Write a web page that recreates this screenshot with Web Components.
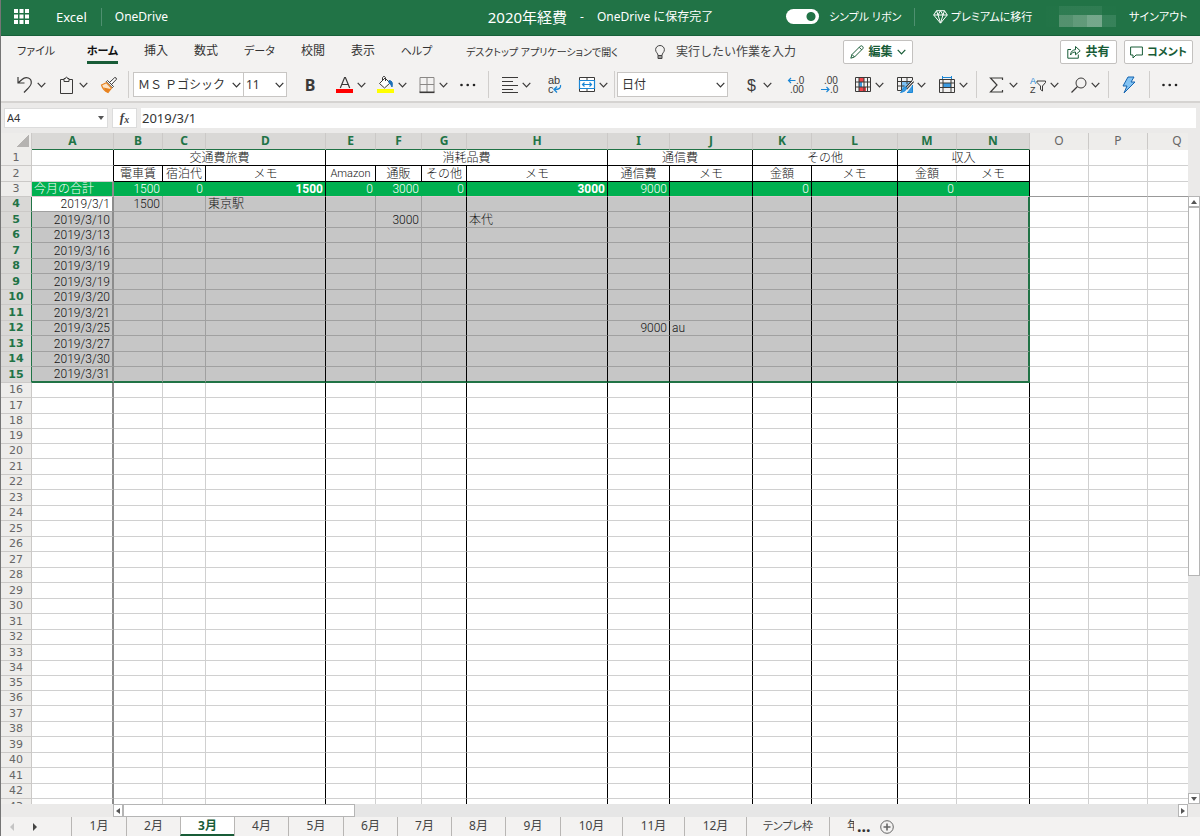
<!DOCTYPE html>
<html lang="ja">
<head>
<meta charset="utf-8">
<meta name="viewport" content="width=device-width, initial-scale=1">
<title>2020年経費 - Excel</title>
<style>
html{height:100%}
body{margin:0;height:100vh;box-sizing:border-box;border-left:1px solid #757575;display:flex;flex-direction:column;overflow:hidden;background:#ebeae9;color:#333;
font:12px/16px "Noto Sans","Noto Sans CJK JP",sans-serif}
</style>
</head>
<body>
<excel-titlebar></excel-titlebar>
<ribbon-tabs></ribbon-tabs>
<ribbon-tools></ribbon-tools>
<formula-bar cell="A4" value="2019/3/1"></formula-bar>
<sheet-view></sheet-view>
<sheet-tabs></sheet-tabs>

<script>
const define = (name, html, setup) => {
  const t = document.createElement('template');
  t.innerHTML = html;
  customElements.define(name, class extends HTMLElement {
    constructor() {
      super();
      this.attachShadow({mode: 'open'}).append(t.content.cloneNode(true));
    }
    connectedCallback() { if (setup) setup(this, this.shadowRoot); }
  });
};
const chevron = '<svg class="chev" width="9" height="6" viewBox="0 0 9 6" fill="none" stroke="currentColor" stroke-width="1.200"><path d="M.7.8 4.5 4.8 8.3.8"/></svg>';

/* Title bar */
define('excel-titlebar', `
<style>
:host{display:grid;grid-template-columns:1fr auto 1fr;align-items:center;flex:none;height:36px;padding-bottom:2px;background:#217346;color:#fff;border-bottom:1px solid #17603a;box-sizing:border-box}
div{display:flex;align-items:center;white-space:nowrap}
a{color:inherit;text-decoration:none}
button{all:unset}
svg{flex:none}
.waffle{display:flex;margin:0 27px 0 13px}
.app{font-size:13px}
.rule{width:1px;height:18px;background:#4f9070}
.left .rule{margin:0 13px 0 14px}
h1{font-size:15px;font-weight:400;margin:0}
.title span{margin:0 13px}
.right{justify-content:flex-end;padding-right:16px;font-size:11px;font-feature-settings:"palt"}
.switch{appearance:none;margin:0 10px 0 0;width:33px;height:15px;border-radius:8px;background:radial-gradient(circle at 25px 50%,#217346 4px,#fff 5px)}
.right label{width:68px}
.right .rule{margin:0 18px 0 17px}
.premium{display:flex;align-items:center;gap:3px;width:100px}
.user{width:70px;height:21px;margin:0 13px 0 13px;background:linear-gradient(#33805610,#33805610),
linear-gradient(90deg,#569270 0 14px,#649c7c 14px 28px,#79aa8f 28px 43px) 13px 9px/43px 12px no-repeat,
linear-gradient(#2f7c52,#2f7c52) 13px 0/43px 9px no-repeat,linear-gradient(#37825a,#37825a) 56px 9px/14px 12px no-repeat}
.out{width:55px}
</style>
<div class="left"><button class="waffle" aria-label="アプリ起動ツール"><svg width="15" height="15" viewBox="0 0 15 15" fill="#fff"><path d="M0 0h4v4H0zM5.500 0h4v4h-4zM11 0h4v4h-4zM0 5.500h4v4H0zM5.500 5.500h4v4h-4zM11 5.500h4v4h-4zM0 11h4v4H0zM5.500 11h4v4h-4zM11 11h4v4h-4z"/></svg></button>
<a class="app" href="#">Excel</a><span class="rule"></span><a href="#">OneDrive</a></div>
<div class="title"><h1>2020年経費</h1><span>-</span><b style="font-weight:400">OneDrive に保存完了</b></div>
<div class="right"><input class="switch" id="simple" type="checkbox" role="switch" checked><label for="simple">シンプル リボン</label><span class="rule"></span>
<a class="premium" href="#"><svg width="15" height="14" viewBox="0 0 15 14" fill="none" stroke="#fff"><path d="M3.500.7h8L14.300 5 7.500 13.200.7 5zM.7 5h13.600M5 5l2.500 8L10 5M3.500.7 5 5 7.500.7 10 5 11.500.7"/></svg>プレミアムに移行</a>
<span class="user"></span><a class="out" href="#">サインアウト</a></div>`);

/* Ribbon tab row */
define('ribbon-tabs', `
<style>
:host{display:flex;align-items:center;flex:none;height:32px;background:#f3f2f1;padding:0 7px 0 18px;white-space:nowrap}
nav{display:flex;gap:26px;font-feature-settings:"palt"}
a{color:#333;text-decoration:none}
nav a{display:flex;justify-content:center;width:24px;height:24px;line-height:22px;box-sizing:border-box}
nav a.k{width:31px;font-size:11px}
nav a.file{width:34px;margin-right:8px;font-size:11px}
nav a.on{font-weight:700;color:#111;border-bottom:3px solid #185c37}
.desk{margin-left:34px;width:189px;font-size:10px;font-feature-settings:"palt"}
.tell{display:flex;align-items:center;gap:11px;width:188px}
input{all:unset;width:130px;font-size:12px}
input::placeholder{color:#444;opacity:1}
svg{flex:none}
button{display:flex;align-items:center;justify-content:center;gap:4px;height:24px;box-sizing:border-box;padding:0;background:#fff;border:1px solid #c3c1bf;border-radius:2px;color:#185c37;font:700 12px/16px "Noto Sans","Noto Sans CJK JP",sans-serif}
.edit{width:70px}.share{width:57px;margin-left:auto}.note{width:69px;margin-left:7px;font-size:11px;font-feature-settings:"palt"}
</style>
<nav><a class="file" href="#">ファイル</a><a class="k on" href="#">ホーム</a><a href="#">挿入</a><a href="#">数式</a><a class="k" href="#">データ</a><a href="#">校閲</a><a href="#">表示</a><a class="k" href="#">ヘルプ</a></nav>
<a class="desk" href="#">デスクトップ アプリケーションで開く</a>
<label class="tell"><svg width="10" height="15" viewBox="0 0 10 15" fill="none" stroke="#444"><path d="M3 10.500C3 8 .6 7.500.6 4.700a4.400 4.200 0 0 1 8.800 0C9.400 7.500 7 8 7 10.500zM3 10.500v3h4v-3M3 12h4"/></svg><input type="text" placeholder="実行したい作業を入力" aria-label="操作アシスト"></label>
<button class="edit"><svg width="14" height="14" viewBox="0 0 14 14" fill="none" stroke="currentColor"><path d="M.8 13.200 2 9.500 10.300 1.200Q11.500.3 12.600 1.400T12.800 3.700L4.500 12zM2 9.500 4.500 12M9.200 2.300l2.500 2.500"/></svg>編集${chevron}</button>
<button class="share"><svg width="14" height="14" viewBox="0 0 14 14" fill="none" stroke="currentColor"><path d="M4 4.500H.8v8.700h10.500V9.500M3.500 10C3.800 6.300 6 4.800 8.500 4.700V1.500l4.700 4.300-4.700 4V7C6.300 7 4.800 7.800 3.500 10z"/></svg>共有</button>
<button class="note"><svg width="13" height="13" viewBox="0 0 13 13" fill="none" stroke="currentColor"><path d="M.6 1h11.800v8H6L3 12V9H.6z"/></svg>コメント</button>`);

/* One toolbar button: slotted icon with an optional arrow */
define('tool-button', `
<style>
:host{display:block;flex:none;width:30px}
:host([menu]){width:41px}
button{all:unset;display:flex;align-items:center;box-sizing:border-box;width:100%;height:26px;padding-left:6px;gap:3px;color:#3b3a39}
.chev{display:none}
:host([menu]) .chev{display:block}
.i{display:flex;justify-content:center;align-items:center;width:18px;height:18px}
</style>
<button><span class="i"><slot></slot></span>${chevron}</button>`, (host, root) => {
  root.querySelector('button').setAttribute('aria-label', host.getAttribute('label') || '');
});

/* Drop-down with its own arrow */
define('tool-select', `
<style>
:host{display:grid;align-items:center;flex:none;width:111px;height:25px;box-sizing:border-box;border:1px solid #c8c6c4;background:#fff}
:host([small]){width:44px;margin-left:-1px}
select,.chev{grid-area:1/1}
.chev{justify-self:end;margin-right:2px;pointer-events:none}
select{appearance:none;border:0;background:none;padding:0 0 0 4px;width:100%;height:23px;color:#333;font:12px/16px "Noto Sans","Noto Sans CJK JP",sans-serif;outline:0}
:host([small]) select{padding-left:2px}
</style>
<select></select>${chevron}`, (host, root) => {
  const s = root.querySelector('select');
  s.setAttribute('aria-label', host.getAttribute('label'));
  s.add(new Option(host.getAttribute('value')));
});

const svg = body => `<svg width="18" height="18" viewBox="0 0 18 18" fill="none" stroke="#3b3a39">${body}</svg>`;
const dots = svg('<g fill="#222" stroke="none"><circle cx="2.500" cy="9" r="1.300"/><circle cx="8.700" cy="9" r="1.300"/><circle cx="15" cy="9" r="1.300"/></g>');

define('ribbon-tools', `
<style>
:host{display:flex;align-items:center;flex:none;height:33px;padding:0 12px 0 9px;background:#f3f2f1;border-bottom:2px solid #d5d3d1;overflow:hidden}
.g{display:flex;align-items:center}
.s{flex:none;width:1px;height:27px;background:#d0cecc;margin:0 5px}
.one{gap:1px}.font{margin-left:8px}.al{gap:3px;margin-left:1px}.num{gap:4px;margin-left:8px}.tab{gap:1px;margin-left:3px}
.font tool-button:first-child{margin-right:5px}
svg{overflow:visible}
svg text{font-family:"Liberation Sans",sans-serif;stroke:none;fill:#3b3a39}
</style>
<div class="g one">
<tool-button menu label="元に戻す">${svg('<path d="M2 1v6h6.500M2 7 6 3.500C10-.2 16 2 15.200 7.500 14.500 11 11 13 8 16.500" stroke-width="1.200"/>')}</tool-button>
<tool-button menu label="貼り付け">${svg('<path d="M6 3.500H2.500v14h12v-14H11M6 5.500v-3h1.500a1 1.300 0 0 1 2 0H11v3z"/>')}</tool-button>
<tool-button label="書式のコピー">${svg('<path d="M9.500 6.500 14.800 1.500q1.700 0 1.700 1.700L11.500 8.500M7.500 4.500 13.500 10.500 12.300 11.700 6.300 5.700z" fill="#fff"/><path d="M6.300 6.700 1.500 9q1.500 5 6.500 7.500L11.500 12z" stroke="#e8821e" fill="#fbe3c6" stroke-width="1.200"/><path d="M3.500 11.500 10.500 13 8 16.500q-3-1.500-4.500-5z" fill="#e8821e" stroke="none"/>')}</tool-button>
</div><span class="s" style="margin:0 4px"></span>
<tool-select label="フォント" value="ＭＳ Ｐゴシック"></tool-select><tool-select small label="サイズ" value="11"></tool-select>
<div class="g font">
<tool-button label="太字"><b style="font-size:16px">B</b></tool-button>
<tool-button menu label="文字の色">${svg('<path d="M4.300 12 8.600 1.500h.8L13.700 12M5.800 8.500h6.400" stroke-width="1.200"/><path d="M0 13h17v4H0z" fill="#f00" stroke="none"/>')}</tool-button>
<tool-button menu label="塗りつぶしの色">${svg('<path d="M2.500 7.500 8 2l5 5-5.500 5zM5.500 5V1.500q1.500-2.500 3 0V5" fill="#fff"/><path d="M12 4.500q4.500 0 3 6.500-1-3-3-4z" fill="#1b6fb8" stroke="#1b6fb8"/><path d="M0 13h17v4H0z" fill="#ff0" stroke="none"/>')}</tool-button>
<tool-button menu label="罫線">${svg('<path d="M2 16V1.500h14V16M9 2v14M2 8.500h14" stroke="#8a8886"/><path d="M1.500 16.300h15" stroke-width="1.600"/>')}</tool-button>
<tool-button label="その他のフォント">${dots}</tool-button>
</div><span class="s"></span>
<div class="g al">
<tool-button menu label="配置">${svg('<path d="M1 1.500h16M1 5.500h11M1 9.500h16M1 13.500h11M1 16.500h16" stroke-width="1.200"/>')}</tool-button>
<tool-button label="折り返して全体を表示する">${svg('<text x="3" y="8" font-size="11">ab</text><text x="3" y="17" font-size="11">c</text><path d="M15.500 9q1 4.500-6 4.500M12 10.500l-3 3 3 3" stroke="#1b87d6" stroke-width="1.300"/>')}</tool-button>
<tool-button menu label="セルの結合">${svg('<path d="M1.500 1.500h15v14h-15zM9 1.500V4M9 13v3" fill="#fff"/><path d="M1.500 4.500h15v8h-15zM4.500 8.500h9M6.500 6.500l-2 2 2 2M11.500 6.500l2 2-2 2" stroke="#1b87d6" stroke-width="1.200"/>')}</tool-button>
</div><span class="s" style="margin:0 2px 0 1px"></span>
<tool-select label="表示形式" value="日付"></tool-select>
<div class="g num">
<tool-button menu label="通貨">${svg('<text x="5" y="15" font-size="16">$</text>')}</tool-button>
<tool-button label="小数点以下の表示桁数を増やす">${svg('<path d="M1.500 4.500h7M4 2 1.500 4.500 4 7" stroke="#1b87d6" stroke-width="1.200"/><text x="9" y="8" font-size="10">.0</text><text x="3" y="17" font-size="10">.00</text>')}</tool-button>
<tool-button label="小数点以下の表示桁数を減らす">${svg('<text x="3" y="8" font-size="10">.00</text><path d="M0 13.500h8M5.500 11 8 13.500 5.500 16" stroke="#1b87d6" stroke-width="1.200"/><text x="9" y="17" font-size="10">.0</text>')}</tool-button>
</div>
<div class="g tab">
<tool-button menu label="条件付き書式">${svg('<path d="M5 1.500h5V6H5zM5 11h7v4.500H5z" fill="#f0444a" stroke="none"/><path d="M5 6h3v5H5z" fill="#3b9be2" stroke="none"/><path d="M1.500 1.500h15v14h-15zM5 1.500v14M10 1.500v14M13.500 1.500v14M1.500 6h15M1.500 11h15"/>')}</tool-button>
<tool-button menu label="テーブルとして書式設定">${svg('<path d="M6 6h9l-6 9H6z" fill="#7cc0f2" stroke="none"/><path d="M16.500 4V1.500h-15v13h4M5.500 1.500v13M11 1.500V8M1.500 5.500h14M1.500 10h7"/><path d="M17 5 10 12.500" stroke-width="3"/><path d="M17 5 10 12.500" stroke="#fff"/><path d="M10.500 11.500q0 4-6 5 2-1.500 2.500-4 1-2 3.500-1zM16.500 9v7.500H11" stroke="#1b87d6" fill="#3b9be2"/>')}</tool-button>
<tool-button menu label="セルの挿入">${svg('<path d="M5 7h8v4.500H5z" fill="#3b9be2" stroke="none"/><path d="M1.500 3.500h15v13h-15zM5 3.500v13M13 3.500v13M1.500 7h15M1.500 11.500h15"/><path d="M4.500 0v3M13.500 0v3M4.500 1.500h9" stroke="#1b87d6"/>')}</tool-button>
</div><span class="s" style="margin:0 5px 0 3px"></span>
<div class="g">
<tool-button menu label="合計">${svg('<path d="M14.500 4V2h-12l6.500 7L2.500 16h12v-2" stroke-width="1.200"/>')}</tool-button>
<tool-button menu label="並べ替えとフィルター">${svg('<text x="1" y="8" font-size="9" style="fill:#1b87d6">A</text><text x="1" y="17" font-size="9">Z</text><path d="M8 5h8.500v1.500l-3 3.500v5l-2-1.500V10L8 6.500z"/>')}</tool-button>
<tool-button menu label="検索と選択">${svg('<circle cx="11" cy="7" r="5"/><path d="M7.500 10.500 1.500 16.500" stroke-width="1.200"/>')}</tool-button>
</div><span class="s" style="margin:0 5px 0 3px"></span>
<tool-button label="アイデア">${svg('<path d="M8 1h6l-3 5h4L4 17l3-7H3z" fill="#83c3f3" stroke="#1565b0"/>')}</tool-button><span class="s"></span>
<tool-button label="その他">${dots}</tool-button>`);

/* Name box and formula input */
define('formula-bar', `
<style>
:host{display:flex;flex:none;gap:4px;height:20px;padding:5px 4px 5px 3px}
div{display:flex;align-items:center;background:#fff;box-sizing:border-box;border:1px solid #dcdcdc}
.name{width:104px;padding:0 3px 0 2px;justify-content:space-between}
.fx{width:25px;justify-content:center;color:#444;font:italic 700 13px/18px "Liberation Serif",serif}
.fx small{font-size:10px;padding-top:3px}
.val{flex:1;border-color:#fff}
input{all:unset;width:80px;font-size:11px;color:#333}
.val input{width:100%;font-size:13px}
</style>
<div class="name"><input type="text" aria-label="名前ボックス"><svg width="6" height="4" viewBox="0 0 6 4"><path d="M0 0h6L3 4z" fill="#555"/></svg></div>
<div class="fx">f<small>x</small></div>
<div class="val"><input type="text" aria-label="数式バー"></div>`, (host, root) => {
  const [n, v] = root.querySelectorAll('input');
  n.value = host.getAttribute('cell'); v.value = host.getAttribute('value');
});

/* Scroll bar: track, thumb and the arrows at both ends */
define('scroll-bar', `
<style>
:host{display:flex;background:#e6e6e6;min-width:0;min-height:0}
:host([vertical]){flex-direction:column}
i{flex:none;box-sizing:border-box;background:#fff;border:1px solid #b5b5b5;width:10px;display:flex;align-items:center;justify-content:center}
:host([vertical]) i{width:auto;height:11px}
.track{flex:1;display:flex;flex-direction:inherit}
.thumb{box-sizing:border-box;background:#fff;border:1px solid #b5b5b5;flex:0 0 22%}
:host([vertical]) .thumb{flex-basis:63%}
.b svg{transform:rotate(180deg)}
:host([vertical]) .a svg{transform:rotate(90deg)}
:host([vertical]) .b svg{transform:rotate(270deg)}
</style>
<i class="a"><svg width="6" height="6" viewBox="0 0 6 6"><path d="M5 0v6L1 3z" fill="#555"/></svg></i><span class="track"><span class="thumb"></span></span><i class="b"><svg width="6" height="6" viewBox="0 0 6 6"><path d="M5 0v6L1 3z" fill="#555"/></svg></i>`);

/* Worksheet */
define('sheet-view', `
<style>
:host{flex:1;min-height:0;display:grid;grid-template:1fr 13px/minmax(0,1fr) 12px;background:#ebeae9}
.pane{overflow:hidden;min-height:0}
scroll-bar[vertical]{margin-top:63px}
.bottom{margin-left:112px}
table{border-collapse:separate;border-spacing:0;table-layout:fixed;width:1206px;background:#fff;font:300 12px/14px Roboto,"Noto Sans CJK JP",sans-serif;color:#111}
tr{height:15px}
tbody tr:nth-child(odd){height:16px}
tbody tr:nth-child(16n+3){height:15px}
th,td{box-sizing:border-box;padding:0 2px;border:0 solid #d0d0d0;border-width:0 1px 1px 0;white-space:nowrap;overflow:hidden;text-align:center}
th{font:400 12px/14px "Noto Sans",sans-serif;color:#666;background:#eeedeb;border-color:#cbc9c7;padding:0}
tbody th{font:400 11px/14px "DejaVu Sans",sans-serif}
thead tr{height:17px}
thead th{border-bottom-color:#eeedeb}
th.on{background:#d9d8d6;color:#217346;font-weight:700}
thead th.on{border-bottom-color:#217346}
tbody th.on{border-right-color:#217346}
thead th:first-child{background:linear-gradient(135deg,#0000 50%,#b5b3b1 50%) right 2px bottom 2px/13px 13px no-repeat,#eeedeb}
.k{border-right-color:#000}
.kb{border-bottom-color:#000}
.frz{border-right:2px solid #8c8c8c}
.num{text-align:right}.txt{text-align:left}
.sum td{border-bottom-color:#999;color:#111}
.sum td.g{background:#00b050;color:#fff;border-bottom-color:#dcc8ce}
.sum td.g:not(.k):not(.frz){border-right-color:#00b050}
.sel td.s{background:#c6c6c6;border-bottom-color:#a0a0a0}
.sel td.s:not(.k):not(.frz){border-right-color:#a0a0a0}
.sel td.act{background:#fff}
.sel td.edge{border-right:2px solid #217346}
.sel.last td.s{border-bottom:2px solid #217346}
b{font-weight:700}
small{font-size:11px}
</style>
<div class="pane"><table><colgroup></colgroup><thead></thead><tbody></tbody></table></div>
<scroll-bar vertical></scroll-bar><scroll-bar class="bottom"></scroll-bar>`, (host, root) => {
  const names = [...'ABCDEFGHIJKLMNOPQ'];
  const widths = [31,82,49,43,120,50,46,45,141,62,83,59,86,59,73,59,59,59];
  const black = 'DGHIJKLN';
  const dates = [1,10,13,16,19,19,20,21,25,27,30,31];
  const heads = {B:'電車賃',C:'宿泊代',D:'メモ',E:'<small>Amazon</small>',F:'通販',G:'その他',H:'メモ',I:'通信費',J:'メモ',K:'金額',L:'メモ',M:'金額',N:'メモ'};
  const sums = {A:'今月の合計',B:'1500',C:'0',D:'<b>1500</b>',E:'0',F:'3000',G:'0',H:'<b>3000</b>',I:'9000',K:'0',M:'0'};
  const notes = {B4:'1500',D4:'東京駅',F5:'3000',H5:'本代',I12:'9000',J12:'au'};
  root.querySelector('colgroup').innerHTML = widths.map(w => `<col style="width:${w}px">`).join('');
  root.querySelector('thead').innerHTML = '<tr><th></th>' + names.map(n => `<th class="${n < 'O' ? 'on' : ''}">${n}</th>`).join('') + '</tr>';
  let out = '';
  for (let r = 1; r <= 43; r++) {
    const sel = r > 3 && r < 16;
    out += `<tr class="${r === 3 ? 'sum' : ''} ${sel ? 'sel' : ''} ${r === 15 ? 'last' : ''}"><th class="${sel ? 'on' : ''}">${r}</th>`;
    if (r === 1) {
      out += '<td class="k"></td>' + [[3,'交通費旅費'],[4,'消耗品費'],[2,'通信費'],[2,'その他'],[2,'収入']].map(([n, t]) => `<td class="k kb" colspan="${n}">${t}</td>`).join('') + '<td></td><td></td><td></td></tr>';
      continue;
    }
    for (const n of names) {
      const c = [];
      let text = '';
      if (black.includes(n)) c.push('k');
      if (n === 'A') c.push(r > 2 ? 'frz' : 'k');
      if (r === 2) { text = heads[n] || ''; if (n > 'A' && n < 'O') c.push('kb'); if ('BCEF'.includes(n)) c.push('k'); }
      if (r === 3) { text = sums[n] || ''; if (n < 'O') c.push('g'); c.push(n === 'A' ? 'txt' : 'num'); }
      if (sel) {
        if (n < 'O') c.push('s');
        if (n === 'N') c.push('edge');
        if (n === 'A') { text = '2019/3/' + dates[r - 4]; c.push('num'); if (r === 4) c.push('act'); }
        else if (notes[n + r]) { text = notes[n + r]; c.push(/^\d/.test(text) ? 'num' : 'txt'); }
      }
      out += `<td class="${c.join(' ')}">${text}</td>`;
    }
    out += '</tr>';
  }
  root.querySelector('tbody').innerHTML = out;
});

/* Sheet tab strip */
define('sheet-tabs', `
<style>
:host{display:flex;flex:none;height:19px;background:#f3f2f1;white-space:nowrap}
.nav{display:flex;align-items:center;gap:19px;width:70px;box-sizing:border-box;padding-left:8px}
a{flex:none;box-sizing:border-box;width:54px;border-left:1px solid #b8b6b4;text-align:center;color:#444;text-decoration:none;line-height:17px}
a:nth-of-type(4n+1){width:55px}
a.w{width:62px}
a.x.x{width:83px;font-size:11px;font-feature-settings:"palt"}
a.cut{width:25px;padding-left:17px;overflow:hidden;text-align:left}
a.on{background:#fff;color:#185c37;font-weight:700;border-bottom:2px solid #185c37}
span{font-size:16px;font-weight:700;line-height:19px;width:14px;margin:0 9px 0 3px}
button{all:unset;display:flex;align-items:center}
</style>
<div class="nav"><button aria-label="前のシート"><svg width="5" height="8" viewBox="0 0 5 8"><path d="M5 0v8L1 4z" fill="#c4c4c4"/></svg></button><button aria-label="次のシート"><svg width="5" height="8" viewBox="0 0 5 8"><path d="M0 0v8l4-4z" fill="#444"/></svg></button></div>
<a href="#">1月</a><a href="#">2月</a><a href="#" class="on">3月</a><a href="#">4月</a><a href="#">5月</a><a href="#">6月</a><a href="#">7月</a><a href="#">8月</a><a href="#">9月</a><a href="#" class="w">10月</a><a href="#" class="w">11月</a><a href="#" class="w">12月</a><a href="#" class="x">テンプレ枠</a><a href="#" class="cut">年</a>
<span>...</span><button aria-label="新しいシート"><svg width="14" height="14" viewBox="0 0 14 14" fill="none" stroke="#666"><circle cx="7" cy="7" r="6.300"/><path d="M7 3.500v7M3.500 7h7" stroke-width="1.600"/></svg></button>`);
</script>
</body>
</html>
